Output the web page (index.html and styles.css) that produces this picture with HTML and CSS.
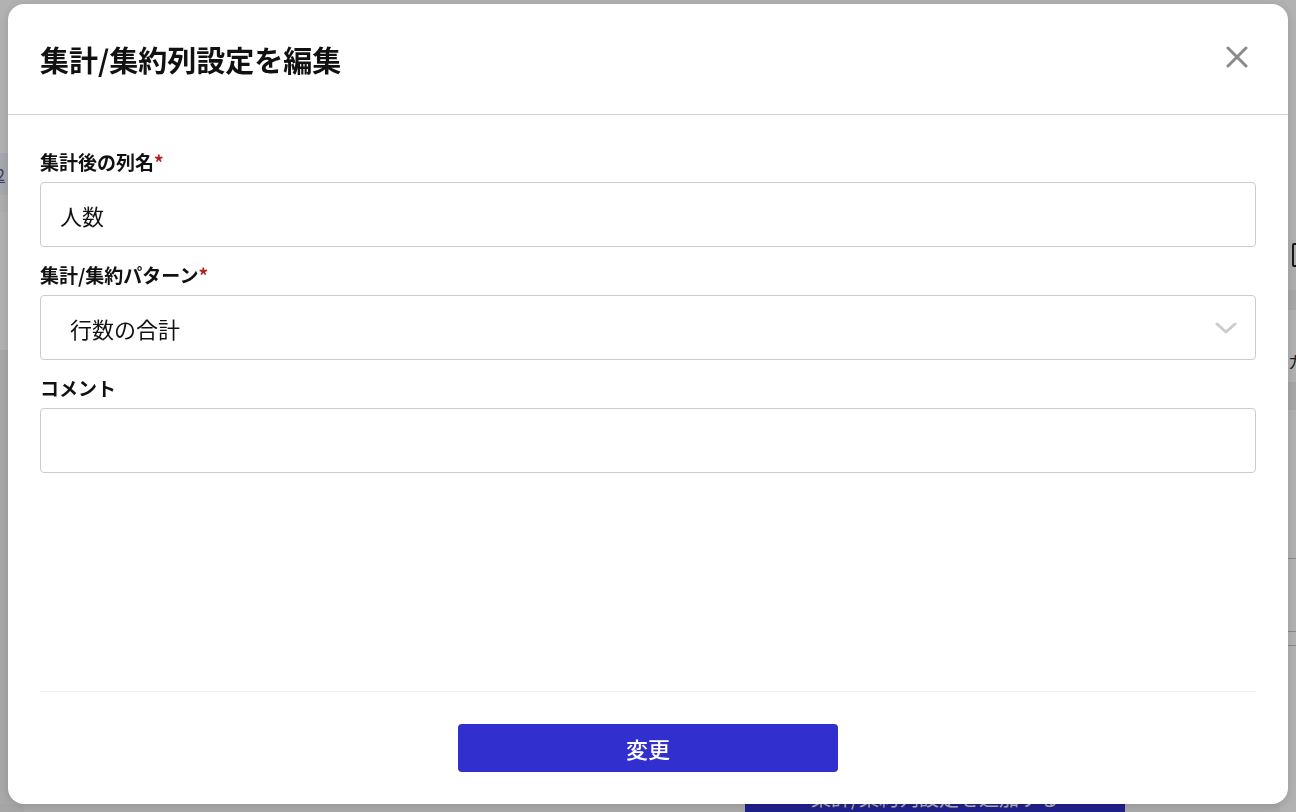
FILE: index.html
```html
<!DOCTYPE html>
<html lang="ja">
<head>
  <meta charset="UTF-8">
  <meta name="viewport" content="width=device-width, initial-scale=1.0">
  <title>集計/集約列設定を編集</title>
  <link rel="stylesheet" href="styles.css">
</head>
<body>
  <div class="page">
    <div class="page-left">
      <div class="l-top"></div>
      <div class="l-link"><span class="page-num">2</span></div>
      <div class="l-sub"></div>
      <div class="l-blank"></div>
      <div class="l-grey"></div>
      <div class="l-foot"></div>
    </div>
    <div class="page-main">
      <div class="page-foot">
        <button class="page-btn">集計/集約列設定を追加する</button>
      </div>
    </div>
    <div class="page-right">
      <div class="r-top"></div>
      <div class="r-icon"><span class="r-icon-box"></span></div>
      <div class="r-band"></div>
      <div class="r-gap"></div>
      <div class="r-text">カ</div>
      <div class="r-band2"></div>
      <div class="r-row r-row-tall"></div>
      <div class="r-row r-row-mid"></div>
      <div class="r-row r-row-small"></div>
    </div>
  </div>

  <div class="overlay">
    <div class="modal">
      <div class="modal-header">
        <h2 class="modal-title">集計/集約列設定を編集</h2>
        <button class="modal-close" aria-label="閉じる">
          <svg width="22" height="22" viewBox="0 0 22 22">
            <path d="M2 2 L20 20 M20 2 L2 20" stroke="#8a8a8a" stroke-width="3" stroke-linecap="round" fill="none"/>
          </svg>
        </button>
      </div>

      <div class="modal-body">
        <div class="field">
          <label class="field-label">集計後の列名<span class="required">*</span></label>
          <input type="text" class="field-input" value="人数">
        </div>
        <div class="field">
          <label class="field-label">集計/集約パターン<span class="required">*</span></label>
          <div class="select-wrap">
            <select class="field-select">
              <option>行数の合計</option>
            </select>
            <svg class="chevron" width="22" height="12" viewBox="0 0 22 12">
              <path d="M2 2 L11 10 L20 2" stroke="#cccccc" stroke-width="3" stroke-linecap="round" stroke-linejoin="round" fill="none"/>
            </svg>
          </div>
        </div>
        <div class="field">
          <label class="field-label">コメント</label>
          <input type="text" class="field-input" value="">
        </div>
      </div>

      <div class="modal-footer">
        <button class="btn-primary">変更</button>
      </div>
    </div>
  </div>
</body>
</html>
```

FILE: styles.css
```css
* {
  box-sizing: border-box;
}

body {
  margin: 0;
  height: 100vh;
  overflow: hidden;
  background: #fff;
  color: #111;
  font-family: "Noto Sans CJK JP", "Noto Sans", sans-serif;
}

/* page behind the dialog */
.page {
  display: grid;
  grid-template-columns: 24px 1fr 16px;
  height: 100vh;
}

.page-left {
  display: flex;
  flex-direction: column;
}

.l-top {
  height: 153px;
}

.l-link {
  height: 42px;
  background: #f1f1fb;
  color: #55558a;
  font-size: 16px;
  line-height: 42px;
  text-decoration: underline;
}

.page-num {
  margin-left: -4px;
}

.l-sub {
  height: 17px;
  background: #fafafa;
}

.l-blank {
  height: 138px;
}

.l-grey {
  flex: 1;
  background: #f2f2f2;
}

.l-foot {
  height: 8px;
  background: #eeeeee;
}

.page-main {
  display: flex;
  flex-direction: column;
  justify-content: flex-end;
}

.page-foot {
  height: 39px;
  overflow: hidden;
  padding-left: 721px;
  background: #f5f5f5;
}

.page-btn {
  width: 380px;
  height: 48px;
  border: none;
  border-radius: 4px;
  background: #2e2ec9;
  color: #fff;
  font-family: inherit;
  font-size: 20px;
  line-height: 48px;
}

.page-right {
  display: flex;
  flex-direction: column;
  background: #fff;
}

.r-top {
  height: 240px;
}

.r-icon {
  height: 50px;
  padding: 3px 0 0 12px;
  background: #fbfbfb;
}

.r-icon-box {
  display: block;
  width: 14px;
  height: 24px;
  border: 2px solid #222;
  border-radius: 2px;
}

.r-band {
  height: 20px;
  background: #f0f0f0;
}

.r-gap {
  height: 30px;
}

.r-text {
  height: 42px;
  padding-left: 8px;
  font-size: 16px;
  line-height: 42px;
  color: #222;
}

.r-band2 {
  height: 28px;
  background: #f0f0f0;
}

.r-row {
  border-bottom: 1px solid #c4c4c4;
}

.r-row-tall {
  height: 149px;
}

.r-row-mid {
  height: 73px;
}

.r-row-small {
  height: 14px;
}

/* dialog */
.overlay {
  position: fixed;
  inset: 0;
  display: flex;
  justify-content: center;
  align-items: flex-start;
  padding-top: 4px;
  background: rgba(0, 0, 0, 0.3);
}

.modal {
  width: 1280px;
  height: 800px;
  display: flex;
  flex-direction: column;
  background: #fff;
  border-radius: 16px;
  box-shadow: 0 2px 12px rgba(0, 0, 0, 0.15);
}

.modal-header {
  height: 111px;
  display: flex;
  align-items: center;
  justify-content: space-between;
  padding: 0 40px 0 32px;
  border-bottom: 1px solid #d2d2d2;
}

.modal-title {
  margin: 0;
  font-size: 29px;
  font-weight: 700;
  line-height: 1;
  color: #111;
}

.modal-close {
  margin-top: -4px;
  padding: 0;
  border: none;
  background: none;
  display: flex;
  cursor: pointer;
}

.modal-body {
  flex: 1;
  padding: 35px 32px 0;
}

.field {
  margin-bottom: 16px;
}

.field-label {
  display: block;
  margin-bottom: 8px;
  font-size: 19px;
  font-weight: 700;
  line-height: 24px;
  color: #111;
}

.required {
  color: #b0201c;
}

.field-input,
.field-select {
  display: block;
  width: 100%;
  height: 65px;
  padding: 0 19px;
  border: 1px solid #cccccc;
  border-radius: 4px;
  background: #fff;
  font-family: inherit;
  font-size: 22px;
  color: #111;
  outline: none;
}

.select-wrap {
  position: relative;
}

.field-select {
  padding-left: 29px;
  appearance: none;
  -webkit-appearance: none;
}

.chevron {
  position: absolute;
  right: 19px;
  top: 27px;
  pointer-events: none;
}

.modal-footer {
  margin: 0 32px;
  padding: 32px 0;
  display: flex;
  justify-content: center;
  border-top: 1px solid #eeeeee;
}

.btn-primary {
  width: 380px;
  height: 48px;
  border: none;
  border-radius: 4px;
  background: #3130cf;
  color: #fff;
  font-family: inherit;
  font-size: 22px;
  font-weight: 500;
  cursor: pointer;
}
```
